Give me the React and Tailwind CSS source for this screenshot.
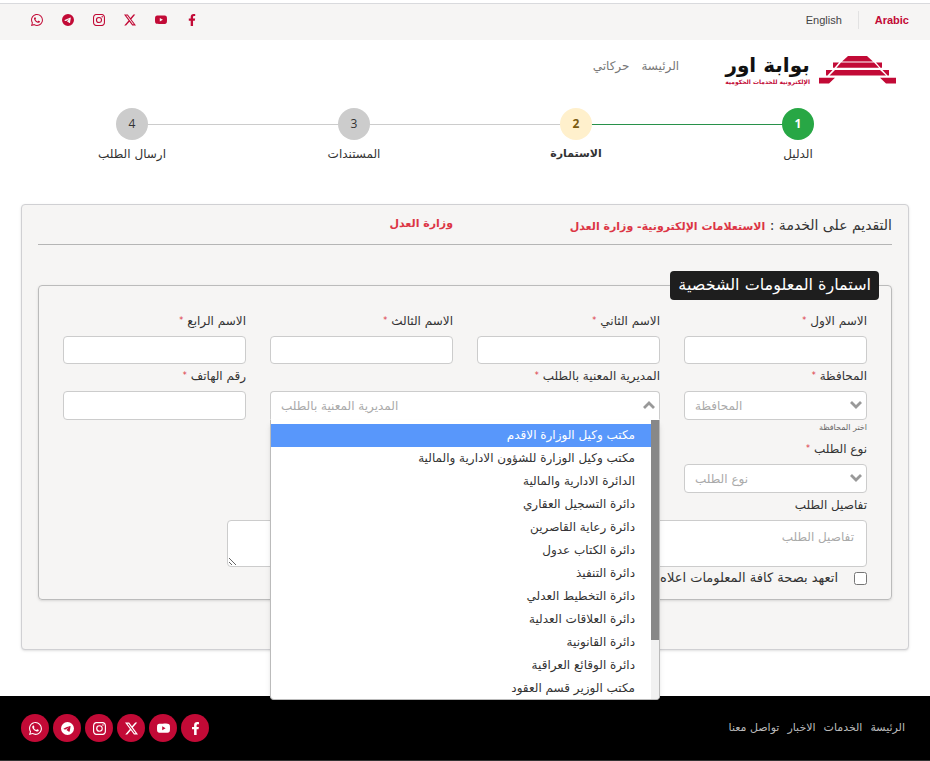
import React from "react";
import {
  BsInstagram,
  BsTelegram,
  BsTwitterX,
  BsWhatsapp,
  BsYoutube,
} from "react-icons/bs";
import { FaFacebookF } from "react-icons/fa";

const socials = [
  { name: "Facebook", Icon: FaFacebookF },
  { name: "YouTube", Icon: BsYoutube },
  { name: "X", Icon: BsTwitterX },
  { name: "Instagram", Icon: BsInstagram },
  { name: "Telegram", Icon: BsTelegram },
  { name: "WhatsApp", Icon: BsWhatsapp },
];

const steps = [
  { n: 1, label: "الدليل", circle: "bg-[#28a745] text-white font-bold", text: "text-xs", line: "bg-[#28914a]" },
  { n: 2, label: "الاستمارة", circle: "bg-[#fff0cc] text-[#7a5a10] font-bold", text: "text-[11px] font-bold", line: "bg-[#ccc]" },
  { n: 3, label: "المستندات", circle: "bg-[#ccc]", text: "text-xs", line: "bg-[#ccc]" },
  { n: 4, label: "ارسال الطلب", circle: "bg-[#ccc]", text: "text-xs", line: null },
];

const directorates = [
  "مكتب وكيل الوزارة الاقدم",
  "مكتب وكيل الوزارة للشؤون الادارية والمالية",
  "الدائرة الادارية والمالية",
  "دائرة التسجيل العقاري",
  "دائرة رعاية القاصرين",
  "دائرة الكتاب عدول",
  "دائرة التنفيذ",
  "دائرة التخطيط العدلي",
  "دائرة العلاقات العدلية",
  "دائرة القانونية",
  "دائرة الوقائع العراقية",
  "مكتب الوزير قسم العقود",
];

function Label({ htmlFor, required = true, children }) {
  return (
    <label htmlFor={htmlFor} className="mb-[3px] flex h-6 items-center gap-1 whitespace-nowrap text-xs">
      {children}
      {required && <span className="text-[8px] text-[#dc3545]">*</span>}
    </label>
  );
}

function TextField({ id, label, type = "text", height = "h-7" }) {
  return (
    <div>
      <Label htmlFor={id}>{label}</Label>
      <input id={id} type={type} className={`${height} block w-full rounded border border-[#ccc] bg-white px-3 text-xs`} />
    </div>
  );
}

function Chevron({ up }) {
  return (
    <svg viewBox="0 0 12 8" className="pointer-events-none absolute right-[5px] top-[10px] h-2 w-3" fill="none" stroke="#999" strokeWidth="2.8">
      <path d={up ? "M1 7 L6 2 L11 7" : "M1 1 L6 6 L11 1"} />
    </svg>
  );
}

function SelectField({ id, label, hint, open, children }) {
  return (
    <div>
      <Label htmlFor={id}>{label}</Label>
      <div className="relative">
        <select
          id={id}
          dir="ltr"
          defaultValue=""
          className={`block h-[29px] w-full appearance-none border border-[#ccc] bg-white pl-[10px] pr-6 text-left text-xs text-[#aaa] ${open ? "rounded-t border-b-white" : "rounded"}`}
        >
          <option value="">{label}</option>
        </select>
        <Chevron up={open} />
        {children}
      </div>
      {hint && <p className="h-[17px] text-[8px] leading-[15px] text-[#666]">{hint}</p>}
    </div>
  );
}

function Logo() {
  return (
    <a href="#" className="flex items-center gap-[9px]">
      <svg viewBox="0 0 77 28" className="h-7 w-[77px]" fill="#c20a36">
        <path d="M29 0 H48 L54 5.500 H23 Z" />
        <path d="M14 6.500 H20 L15.500 11.700 H14 Z M22 6.500 H55 L60 11.700 H17.500 Z M57 6.500 H63 V11.700 H61.500 Z" />
        <path d="M7 14 H13.500 L8.500 19.500 H7 Z M16 14 H61 L67 19.500 H10.500 Z M63.500 14 H70 V19.500 H68.500 Z" />
        <path d="M0 21.800 H16 L10 27.500 H0 Z M61 21.800 H77 V27.500 H67 Z" />
      </svg>
      <span className="flex flex-col items-center whitespace-nowrap">
        <span className="text-xl font-bold leading-6 text-[#111]">بوابة اور</span>
        <span className="text-[6px] font-bold leading-[10px] text-[#c20a36]">الإلكترونية للخدمات الحكومية</span>
      </span>
    </a>
  );
}

export default function App() {
  return (
    <div dir="rtl" className="min-h-screen bg-white font-['DejaVu_Sans',sans-serif] text-[#333]">
      <div className="pt-[3px]">
        <div className="flex h-[37px] items-center justify-between border-t border-[#d9dadd] bg-[#f6f5f4] pb-1 px-[21px]">
          <nav className="flex items-center font-['Liberation_Sans',sans-serif] text-[11px]">
            <a href="#" className="font-bold text-[#c20a36]">Arabic</a>
            <span className="mx-4 h-[18px] w-px bg-[#e2e2e2]" />
            <a href="#" className="text-[#444]">English</a>
          </nav>
          <ul className="flex items-center text-xs text-[#c20a36]">
            {socials.map(({ name, Icon }) => (
              <li key={name} className="flex w-[31px] justify-center">
                <a href="#" aria-label={name}><Icon className="size-3" /></a>
              </li>
            ))}
          </ul>
        </div>
      </div>

      <header className="flex h-[60px] items-center gap-[46px] px-[34px]">
        <Logo />
        <nav className="flex gap-3 pb-2 text-xs text-[#777]">
          <a href="#">الرئيسة</a>
          <a href="#">حركاتي</a>
        </nav>
      </header>

      <ol className="mx-[21px] grid grid-cols-4 pt-2">
        {steps.map((s) => (
          <li key={s.n} className="relative flex flex-col items-center">
            {s.line && <span className={`absolute right-1/2 top-4 h-px w-full ${s.line}`} />}
            <span className={`relative z-10 flex size-8 items-center justify-center rounded-full font-['Open_Sans',sans-serif] text-xs ${s.circle}`}>{s.n}</span>
            <span className="mt-1 flex h-5 items-center">
              <span className={s.text}>{s.label}</span>
            </span>
          </li>
        ))}
      </ol>

      <main className="mx-[21px] mt-10 rounded border border-[#d0d0d3] bg-[#f6f5f4] px-4 pb-[49px] shadow">
        <div className="grid h-10 grid-cols-2 items-center gap-6 whitespace-nowrap border-b border-[#b5b5b5]">
          <h1 className="text-sm">
            التقديم على الخدمة :{" "}
            <span className="text-[11px] font-bold text-[#dc3545]">الاستعلامات الإلكترونية- وزارة العدل</span>
          </h1>
          <p className="text-[11px] font-bold text-[#dc3545]">وزارة العدل</p>
        </div>

        <form>
          <fieldset className="mt-[26px] min-w-0 rounded border border-[#bbb] px-6 pb-[10px] pt-[9px] shadow-sm">
            <legend className="-mr-3 h-[29px] rounded bg-[#1e1e1e] px-2 text-base leading-7 text-white">استمارة المعلومات الشخصية</legend>
            <div className="grid grid-cols-4 gap-x-6">
              <TextField id="name1" label="الاسم الاول" />
              <TextField id="name2" label="الاسم الثاني" />
              <TextField id="name3" label="الاسم الثالث" />
              <TextField id="name4" label="الاسم الرابع" />
              <SelectField id="province" label="المحافظة" hint="اختر المحافظة" />
              <div className="col-span-2">
                <SelectField id="directorate" label="المديرية المعنية بالطلب" open>
                  <div className="absolute inset-x-0 top-full z-20 flex h-[280px] overflow-hidden rounded-b border border-t-0 border-[#bbb] bg-white shadow-md">
                    <div className="w-2 shrink-0 bg-[#f1f1f1]">
                      <div className="h-[220px] bg-[#888]" />
                    </div>
                    <ul role="listbox" aria-label="المديرية المعنية بالطلب" className="flex-1 whitespace-nowrap pt-1 text-xs leading-[23px]">
                      {directorates.map((d, i) => (
                        <li key={d} role="option" aria-selected={i === 0} className={`px-4 ${i === 0 ? "bg-[#5897fb] text-white" : ""}`}>{d}</li>
                      ))}
                    </ul>
                  </div>
                </SelectField>
              </div>
              <TextField id="phone" label="رقم الهاتف" type="tel" height="h-[29px]" />
              <SelectField id="kind" label="نوع الطلب" />
            </div>
            <Label htmlFor="details" required={false}>تفاصيل الطلب</Label>
            <textarea id="details" placeholder="تفاصيل الطلب" className="block h-[47px] w-[640px] max-w-full resize-y rounded border border-[#ccc] bg-white px-3 py-2 text-xs placeholder:text-[#aaa]" />
            <label className="flex h-[22px] items-center gap-4 text-[13px]">
              <input type="checkbox" className="size-[13px]" />
              اتعهد بصحة كافة المعلومات اعلاه
            </label>
          </fieldset>
        </form>
      </main>

      <footer className="mt-[46px] flex h-[65px] items-center justify-between border-b border-[#333] bg-black pl-[21px] pr-[25px]">
        <nav className="flex gap-2 text-[11px] text-[#bbb]">
          <a href="#">الرئيسة</a>
          <a href="#">الخدمات</a>
          <a href="#">الاخبار</a>
          <a href="#">تواصل معنا</a>
        </nav>
        <ul className="flex gap-1">
          {socials.map(({ name, Icon }) => (
            <li key={name}>
              <a href="#" aria-label={name} className="flex size-7 items-center justify-center rounded-full bg-[#c20a36] text-white">
                <Icon className="size-[13px]" />
              </a>
            </li>
          ))}
        </ul>
      </footer>
    </div>
  );
}
